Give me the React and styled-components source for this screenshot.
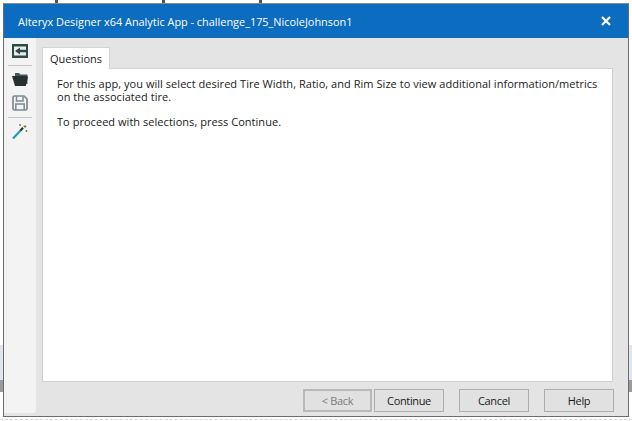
import React from "react";
import styled, { createGlobalStyle } from "styled-components";

const Global = createGlobalStyle`
  html, body { margin: 0; padding: 0; background: #fff; }
  body { width: 632px; height: 421px; overflow: hidden; }
`;
const Page = styled.div`
  position: relative; width: 632px; height: 421px; padding: 3px 3px 4px 3px; box-sizing: border-box;
  background: #fff; font-family: "Open Sans", "Noto Sans", sans-serif; color: #1a1a1a;
`;
const Behind = styled.div`
  position: absolute; left: 0; width: 3px; top: ${p => p.$top}px; height: ${p => p.$h}px; background: ${p => p.$c};
`;
const BehindRight = styled(Behind)`left: auto; right: 0; width: 4px;`;
const Tick = styled.div`
  position: absolute; top: 0; left: ${p => p.$x}px; width: 3px; height: 3px; background: #555;
`;
const Dotted = styled.div`
  position: absolute; left: 0; right: 0; top: 419px; border-top: 1px dashed #d8d8d8;
`;
const Window = styled.div`
  position: relative; height: 100%; box-sizing: border-box; border: 1px solid #6d6d6d; border-top-color: #8a8a8a;
  background: #e4e4e4; display: flex; flex-direction: column;
`;
const TitleBar = styled.div`
  height: 34px; flex: none; background: #0b6cc0; color: #fff; display: flex; align-items: center;
  justify-content: space-between; padding: 0 17px 0 14px; font-size: 10.9px;
`;
const Close = styled.svg`width: 10px; height: 10px; display: block;`;
const Body = styled.div`flex: 1; display: flex; min-height: 0;`;
const Side = styled.div`
  width: 32px; flex: none; margin-bottom: 3px; background: #f3f3f3; display: flex; flex-direction: column;
  align-items: center; padding-top: 5px; box-sizing: border-box; border-radius: 0 0 3px 0;
`;
const Tool = styled.svg`width: 16px; height: 16px; display: block; margin-top: ${p => p.$mt || 0}px;`;
const Rule = styled.div`width: 24px; height: 1px; background: #c4c4c4; margin: ${p => p.$mt}px 0 0;`;
const Main = styled.div`flex: 1; min-width: 0; display: flex; flex-direction: column; padding: 9px 15px 0 6px;`;
const Tabs = styled.div`display: flex; height: 22px; flex: none; position: relative; z-index: 1;`;
const Tab = styled.div`
  width: 68px; height: 22px; box-sizing: border-box; background: #fff; border: 1px solid #d4d4d4; border-bottom: 0;
  font-size: 11px; display: flex; align-items: center; justify-content: center;
`;
const Panel = styled.div`
  height: 314px; flex: none; box-sizing: border-box; background: #fff; border: 1px solid #d0d0d0; margin-top: -1px;
  padding: 8px 8px 8px 14px; font-size: 11px; line-height: 13px; letter-spacing: 0.04px;
`;
const Para = styled.p`margin: 0 0 12px;`;
const Footer = styled.div`
  flex: 1; display: flex; justify-content: flex-end; align-items: flex-start; padding-top: 7px; margin-right: -1px;
`;
const Btn = styled.div`
  width: ${p => p.$w}px; height: 23px; box-sizing: border-box; margin-left: ${p => p.$ml}px;
  background: #e1e1e1; border: ${p => (p.$off ? "2px solid #b9b9b9" : "1px solid #adadad")};
  color: ${p => (p.$off ? "#7b7b7b" : "#1a1a1a")}; font-size: 11px; letter-spacing: -0.35px;
  display: flex; align-items: center; justify-content: center;
`;

export default function App() {
  return (
    <Page>
      <Global />
      <Tick $x={55} /><Tick $x={162} /><Tick $x={259} />
      <Dotted />
      <Behind $top={345} $h={35} $c="#dfe6ee" />
      <Behind $top={380} $h={12} $c="#9a9a9a" />
      <BehindRight $top={345} $h={35} $c="#dfe6ee" />
      <BehindRight $top={380} $h={12} $c="#9a9a9a" />
      <Window>
        <TitleBar>
          <span>Alteryx Designer x64 Analytic App - challenge_175_NicoleJohnson1</span>
          <Close viewBox="0 0 10 10"><path d="M1 1L9 9M9 1L1 9" stroke="#fff" strokeWidth="2.2" /></Close>
        </TitleBar>
        <Body>
          <Side>
            <Tool viewBox="0 0 16 16">
              <rect x="0" y="1" width="16" height="14" fill="#2e4a47" />
              <rect x="2" y="3.5" width="12" height="9" fill="#e8eeee" />
              <path d="M14 6.8H8V4.5L3 8l5 3.5V9.2h6z" fill="#2e4a47" />
            </Tool>
            <Rule $mt={6} />
            <Tool viewBox="0 0 16 16" $mt={5}>
              <path d="M3 2h4l1.5 1.5H15.5V13H3z" fill="#46585a" />
              <path d="M0 5h13l3 .5-2.2 9.5H3z" fill="#26312f" />
            </Tool>
            <Tool viewBox="0 0 16 16" $mt={8}>
              <path d="M1 2.5A1.5 1.5 0 0 1 2.5 1H12l3 3v9.5a1.5 1.5 0 0 1-1.5 1.5h-11A1.5 1.5 0 0 1 1 13.5z" fill="none" stroke="#7d8b90" strokeWidth="1.7" />
              <path d="M4.5 1.5V6h6.5V1.5M3.8 15V9h8.4v6" fill="none" stroke="#7d8b90" strokeWidth="1.5" />
            </Tool>
            <Rule $mt={6} />
            <Tool viewBox="0 0 16 16" $mt={5}>
              <path d="M1 15.5L9 7" stroke="#1f9fb0" strokeWidth="2.2" />
              <path d="M8.5 7.5l2.5-2.7" stroke="#333" strokeWidth="2.2" />
              <path d="M13 2v3M11.5 3.5h3M14.5 7v2M13.5 8h2M8 1v2M7 2h2" stroke="#8a7a3a" strokeWidth="1" />
            </Tool>
          </Side>
          <Main>
            <Tabs><Tab>Questions</Tab></Tabs>
            <Panel>
              <Para>For this app, you will select desired Tire Width, Ratio, and Rim Size to view additional information/metrics on the associated tire.</Para>
              <Para>To proceed with selections, press Continue.</Para>
            </Panel>
            <Footer>
              <Btn $w={69} $ml={0} $off>&lt; Back</Btn>
              <Btn $w={70} $ml={2}>Continue</Btn>
              <Btn $w={70} $ml={15}>Cancel</Btn>
              <Btn $w={70} $ml={15}>Help</Btn>
            </Footer>
          </Main>
        </Body>
      </Window>
    </Page>
  );
}
